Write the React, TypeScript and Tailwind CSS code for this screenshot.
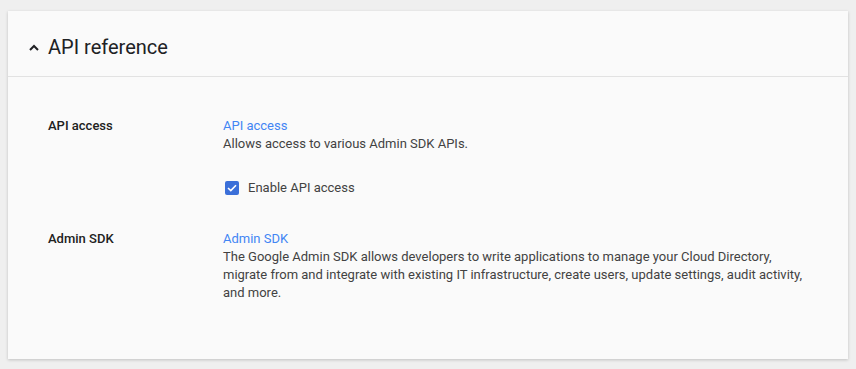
export default function App() {
  return (
    <div
      className="w-[856px] h-[369px] bg-[#efefef] pt-[11px] px-2"
      style={{ fontFamily: "Roboto, 'Liberation Sans', sans-serif" }}
    >
      <div className="h-[348px] w-[840px] bg-[#fafafa] shadow-[0_1px_3px_rgba(0,0,0,0.2)]">
        <div className="flex h-[66px] items-center border-b border-[#e2e2e2] pl-[21px] pt-[7px]">
          <svg width="10" height="7" viewBox="0 0 10 7" className="mr-[9px]">
            <path d="M1 6 L5 2 L9 6" fill="none" stroke="#202124" strokeWidth="2" />
          </svg>
          <h1 className="text-[20px] text-[#202124]">API reference</h1>
        </div>

        <div className="pl-10 pt-[40px] text-[13px] leading-[18px]">
          <div className="flex">
            <div className="w-[175px] font-medium text-[#212121]">API access</div>
            <div>
              <a className="text-[#4285f4]">API access</a>
              <p className="text-[#424242]">Allows access to various Admin SDK APIs.</p>
              <label className="mt-[26px] flex items-center">
                <span className="ml-[2px] mr-[9px] flex h-[14px] w-[14px] items-center justify-center rounded-[2px] bg-[#3b6fd9]">
                  <svg width="10" height="8" viewBox="0 0 10 8">
                    <path d="M1 4 L3.8 6.6 L9 1.2" fill="none" stroke="#fff" strokeWidth="1.6" />
                  </svg>
                </span>
                <span className="text-[#424242]">Enable API access</span>
              </label>
            </div>
          </div>

          <div className="mt-[33px] flex">
            <div className="w-[175px] font-medium text-[#212121]">Admin SDK</div>
            <div className="w-[580px]">
              <a className="text-[#4285f4]">Admin SDK</a>
              <p className="text-[#424242]">
                The Google Admin SDK allows developers to write applications to manage your Cloud Directory,
                migrate from and integrate with existing IT infrastructure, create users, update settings, audit activity,
                and more.
              </p>
            </div>
          </div>
        </div>
      </div>
    </div>
  );
}
